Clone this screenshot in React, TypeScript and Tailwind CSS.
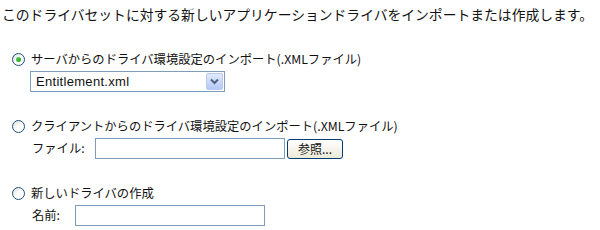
import React from "react";

const jp = { fontFamily: '"Noto Sans CJK JP", "Liberation Sans", sans-serif' };

function Radio({ checked }: { checked?: boolean }) {
  return (
    <span className="relative inline-flex h-[13px] w-[13px] shrink-0 items-center justify-center rounded-full border border-[#1c5180] bg-gradient-to-br from-[#dcdcd7] via-white to-white">
      {checked && (
        <span className="h-[5px] w-[5px] rounded-full bg-gradient-to-br from-[#55d551] to-[#21a121]" />
      )}
    </span>
  );
}

function Option({ checked, label, children }: { checked?: boolean; label: string; children: React.ReactNode }) {
  return (
    <div>
      <div className="flex items-center gap-[6px] pl-[12px]">
        <Radio checked={checked} />
        <span className="text-[12.3px] leading-[16px] text-[#111]">{label}</span>
      </div>
      <div className="mt-[4px] pl-[32px]">{children}</div>
    </div>
  );
}

export default function App() {
  return (
    <div className="h-[230px] w-[600px] overflow-hidden bg-white" style={jp}>
      <p className="pl-[2px] pt-[6px] text-[13.8px] leading-[16px] text-[#111]">
        このドライバセットに対する新しいアプリケーションドライバをインポートまたは作成します。
      </p>

      <div className="mt-[29px] flex flex-col gap-[26px]">
        <Option checked label="サーバからのドライバ環境設定のインポート(.XMLファイル)">
          {/* Select */}
          <div className="-ml-[2px] flex h-[21px] w-[195px] items-center justify-between border border-[#7f9db9] bg-white pl-[5px] pr-[1px]">
            <span className="text-[13px] tracking-[0.3px] text-[#111]" style={{ fontFamily: '"Liberation Sans", sans-serif' }}>
              Entitlement.xml
            </span>
            <span className="flex h-[17px] w-[17px] items-center justify-center rounded-[2px] border border-[#b9c9ef] bg-gradient-to-b from-[#e1eafe] to-[#b4c8f6]">
              <svg width="9" height="7" viewBox="0 0 9 7">
                <path d="M1 1.5 L4.5 5 L8 1.5" fill="none" stroke="#4d6185" strokeWidth="2" />
              </svg>
            </span>
          </div>
        </Option>

        <Option label="クライアントからのドライバ環境設定のインポート(.XMLファイル)">
          <div className="flex items-center">
            <span className="w-[63px] text-[12.3px] text-[#111]">ファイル:</span>
            <div className="h-[21px] w-[190px] border border-[#7f9db9] bg-white" />
            <button className="ml-[2px] h-[20px] w-[56px] rounded-[3px] border border-[#003c74] bg-gradient-to-b from-white to-[#ece9d8] text-[12px] leading-[16px] text-[#111]">
              参照...
            </button>
          </div>
        </Option>

        <Option label="新しいドライバの作成">
          <div className="flex items-center">
            <span className="w-[43px] text-[12.3px] text-[#111]">名前:</span>
            <div className="h-[21px] w-[190px] border border-[#7f9db9] bg-white" />
          </div>
        </Option>
      </div>
    </div>
  );
}
